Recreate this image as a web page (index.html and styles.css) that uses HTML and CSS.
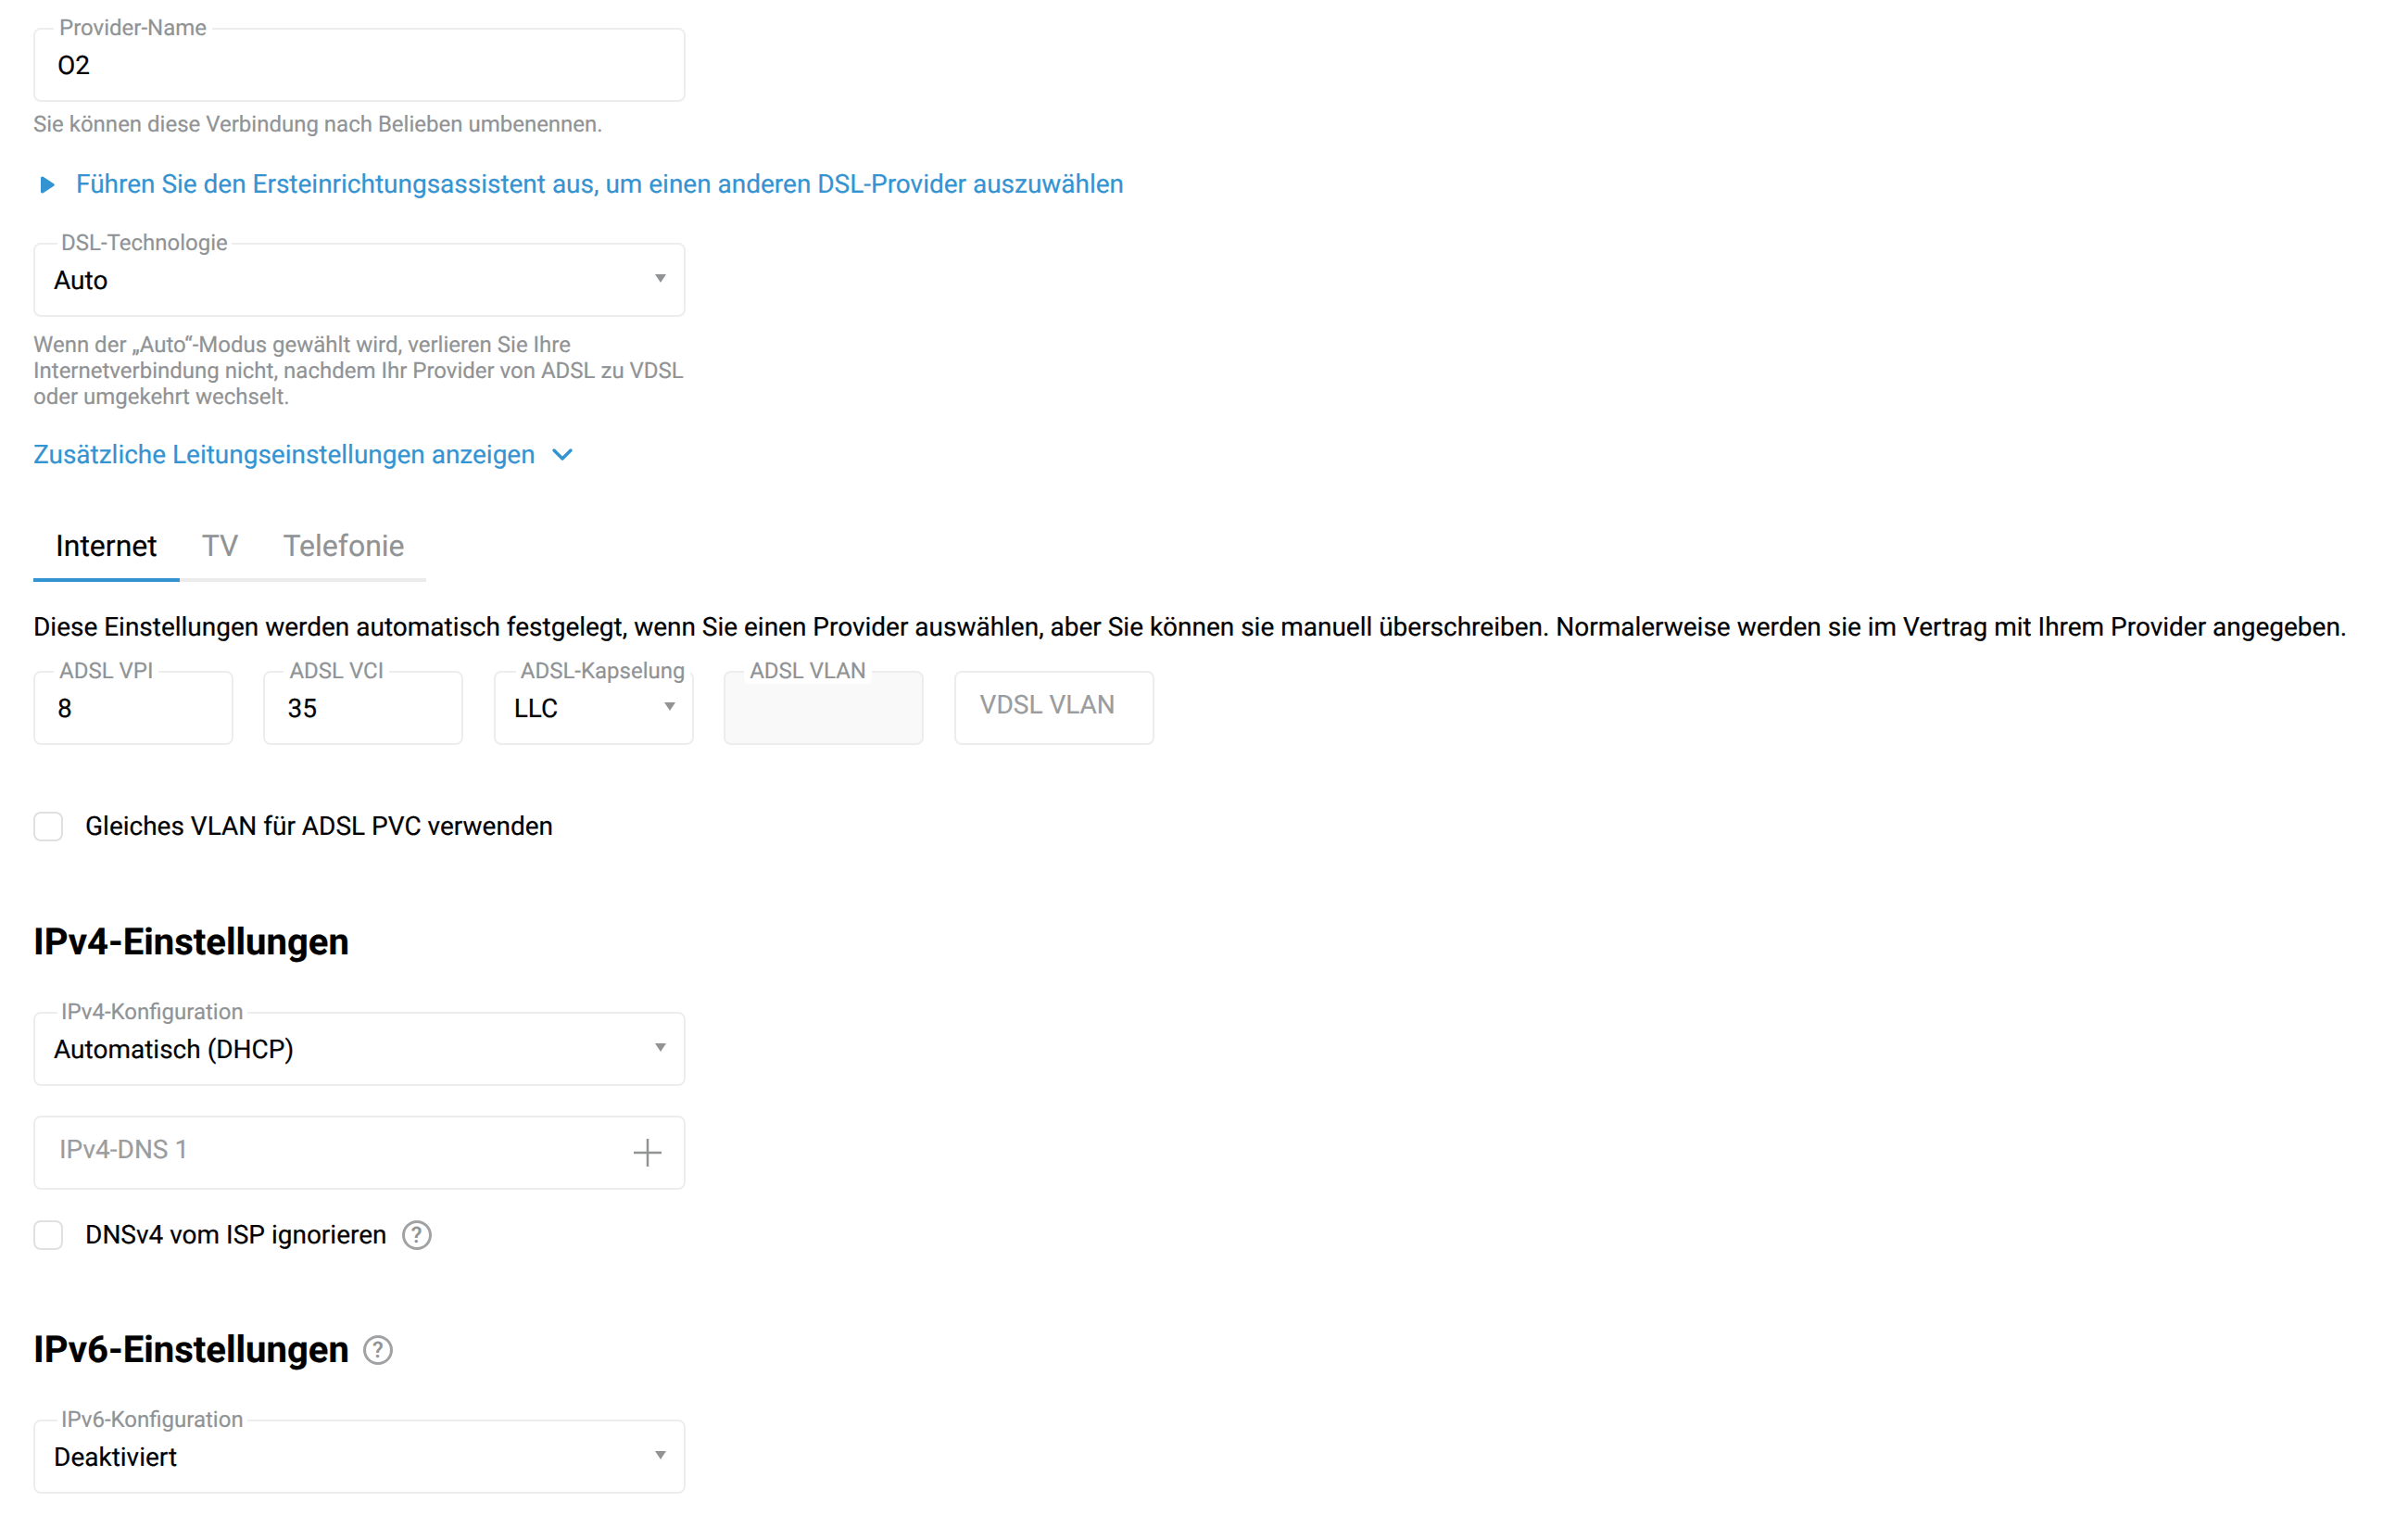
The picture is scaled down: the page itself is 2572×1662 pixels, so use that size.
FILE: index.html
```html
<!DOCTYPE html>
<html lang="de">
<head>
<meta charset="utf-8">
<title>DSL-Einstellungen</title>
<link rel="stylesheet" href="styles.css">
</head>
<body>
<main class="page">
  <div class="field field-first">
    <span class="label">Provider-Name</span>
    <span class="value value-input">O2</span>
  </div>
  <p class="hint hint-single">Sie können diese Verbindung nach Belieben umbenennen.</p>
  <a class="link wizard"><svg class="play" viewBox="0 0 14 18" preserveAspectRatio="none" aria-hidden="true"><path d="M0 2v14a1.6 1.6 0 0 0 2.5 1.3l10.6-7a1.6 1.6 0 0 0 0-2.6L2.5.7A1.6 1.6 0 0 0 0 2z"/></svg>Führen Sie den Ersteinrichtungsassistent aus, um einen anderen DSL-Provider auszuwählen</a>
  <div class="field field-dsl">
    <span class="label label-select">DSL-Technologie</span>
    <span class="value">Auto</span>
    <i class="caret"></i>
  </div>
  <p class="hint hint-multi">Wenn der „Auto“-Modus gewählt wird, verlieren Sie Ihre<br>Internetverbindung nicht, nachdem Ihr Provider von ADSL zu VDSL<br>oder umgekehrt wechselt.</p>
  <a class="link more">Zusätzliche Leitungseinstellungen anzeigen<svg class="chev" viewBox="0 0 24 16" aria-hidden="true"><path d="M3 3l9 9 9-9"/></svg></a>

  <nav class="tabs">
    <span class="tab tab-active">Internet</span>
    <span class="tab">TV</span>
    <span class="tab">Telefonie</span>
  </nav>
  <p class="intro">Diese Einstellungen werden automatisch festgelegt, wenn Sie einen Provider auswählen, aber Sie können sie manuell überschreiben. Normalerweise werden sie im Vertrag mit Ihrem Provider angegeben.</p>
  <div class="row">
    <div class="field small"><span class="label">ADSL VPI</span><span class="value value-input">8</span></div>
    <div class="field small"><span class="label">ADSL VCI</span><span class="value value-input">35</span></div>
    <div class="field small"><span class="label label-narrow">ADSL-Kapselung</span><span class="value">LLC</span><i class="caret"></i></div>
    <div class="field small disabled"><span class="label">ADSL VLAN</span></div>
    <div class="field small"><span class="placeholder placeholder-large">VDSL VLAN</span></div>
  </div>
  <label class="check check-vlan"><span class="box"></span>Gleiches VLAN für ADSL PVC verwenden</label>

  <h2 class="heading heading-v4">IPv4-Einstellungen</h2>
  <div class="field">
    <span class="label label-select">IPv4-Konfiguration</span>
    <span class="value">Automatisch (DHCP)</span>
    <i class="caret"></i>
  </div>
  <div class="field field-dns">
    <span class="placeholder placeholder-large">IPv4-DNS 1</span>
    <svg class="plus" viewBox="0 0 30 30" aria-hidden="true"><path d="M15 0v30M0 15h30"/></svg>
  </div>
  <label class="check check-dns"><span class="box"></span>DNSv4 vom ISP ignorieren<span class="help help-check">?</span></label>

  <h2 class="heading heading-v6">IPv6-Einstellungen<span class="help help-heading">?</span></h2>
  <div class="field">
    <span class="label label-select">IPv6-Konfiguration</span>
    <span class="value">Deaktiviert</span>
    <i class="caret"></i>
  </div>
</main>
</body>
</html>
```
FILE: styles.css
```css
* { box-sizing: border-box; }
html, body { margin: 0; background: #fff; }
body { font-family: Roboto, "Liberation Sans", sans-serif; color: #000; text-rendering: geometricPrecision; -webkit-text-stroke: 0.2px currentColor; }
.page { padding: 30px 0 0 36px; display: flex; flex-direction: column; align-items: flex-start; min-height: 1662px; }

.field { position: relative; width: 704px; height: 80px; flex: none; border: 2px solid #eceded; border-radius: 8px; background: #fff; display: flex; align-items: center; }
.small { width: 216px; }
.disabled { background: #f9f9f9; }
.label { position: absolute; left: 20px; top: -16px; padding: 0 6px; font-size: 24px; line-height: 28px; color: #909395; background: #fff; border-radius: 0 0 6px 6px; white-space: nowrap; }
.label-select { left: 24px; padding: 0 4px; }
.label-narrow { left: 22px; padding: 0 5px; }
.value { font-size: 28px; line-height: 32px; padding-left: 20px; position: relative; top: 1px; }
.value-input { padding-left: 24px; }
.caret { position: absolute; right: 19px; top: 32px; width: 0; height: 0; border-left: 6.5px solid transparent; border-right: 6.5px solid transparent; border-top: 9px solid #919395; }
.small .caret { right: 18px; }
.placeholder { font-size: 28px; line-height: 32px; padding-left: 26px; color: #9a9c9e; position: relative; }
.placeholder-large { top: -3px; }
.plus { position: absolute; right: 24px; top: 23px; width: 30px; height: 30px; fill: none; stroke: #919395; stroke-width: 2.5; }

.hint { margin: 0; font-size: 24px; line-height: 28px; color: #909395; white-space: nowrap; }
.hint-single { margin-top: 10px; }
.hint-multi { margin-top: 16px; }

.link { color: #3494d2; font-size: 28px; line-height: 34px; letter-spacing: -0.015px; display: flex; align-items: center; white-space: nowrap; }
.wizard { margin: 34px 0 46px 8px; }
.more { margin-top: 32px; }
.play { width: 15px; height: 19px; margin-right: 23px; fill: #3494d2; }
.chev { width: 24px; height: 16px; margin-left: 17px; fill: none; stroke: #3494d2; stroke-width: 3.5; stroke-linecap: round; stroke-linejoin: round; }

.tabs { margin-top: 62px; width: 424px; display: flex; border-bottom: 4px solid #ebebeb; }
.tab { font-size: 32px; line-height: 38px; padding: 0 24px 16px; color: #909395; margin-bottom: -4px; border-bottom: 4px solid transparent; }
.tab-active { color: #000; border-bottom-color: #3494d2; }

.intro { margin: 33px 0 0; font-size: 28px; line-height: 32px; letter-spacing: -0.012px; white-space: nowrap; }
.row { margin-top: 31px; display: flex; gap: 32.4px; }

.check { display: flex; align-items: center; font-size: 28px; line-height: 32px; }
.box { width: 32px; height: 32px; margin-right: 24px; border: 2px solid #dfe0e1; border-radius: 8px; background: #fff; flex: none; }
.check-vlan { margin-top: 72px; }
.check-dns { margin-top: 33px; }

.heading { margin: 0; font-size: 40px; line-height: 48px; font-weight: 700; display: flex; align-items: center; }
.heading-v4 { margin-top: 85px; margin-bottom: 51px; }
.heading-v6 { margin-top: 84px; margin-bottom: 51px; }
.field-dns { margin-top: 32px; }

.help { width: 32px; height: 32px; border: 3px solid #a0a2a4; border-radius: 50%; color: #919395; font-size: 24px; line-height: 26px; font-weight: 500; text-align: center; flex: none; }
.help-check { margin-left: 16px; }
.help-heading { margin-left: 15px; }
```
